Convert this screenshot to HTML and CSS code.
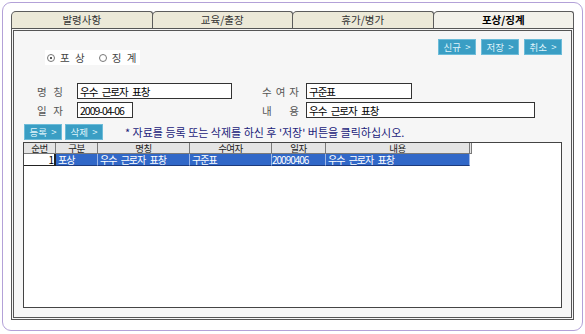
FILE: index.html
```html
<!DOCTYPE html>
<html>
<head>
    <meta charset="utf-8">
    <link rel="stylesheet" href="styles.css">
</head>
<body>

    <div class="frame">

        <div class="tabs">
            <div class="tab">발령사항</div>
            <div class="tab">교육/출장</div>
            <div class="tab">휴가/병가</div>
            <div class="tab active">포상/징계</div>
        </div>

        <div class="panel">

            <div class="toolbar">
                <div class="choice">
                    <span class="radio checked"></span><span class="choice-text">포 상</span>
                    <span class="radio"></span><span class="choice-text">징 계</span>
                </div>
                <div class="actions">
                    <button class="btn">신규 &gt;</button>
                    <button class="btn">저장 &gt;</button>
                    <button class="btn">취소 &gt;</button>
                </div>
            </div>

            <div class="fields">
                <div class="field-row">
                    <label class="label">명 칭</label>
                    <input class="input name" type="text" value="우수 근로자 표창">
                    <label class="label wide">수 여 자</label>
                    <input class="input giver" type="text" value="구준표">
                </div>
                <div class="field-row">
                    <label class="label">일 자</label>
                    <input class="input date" type="text" value="2009-04-06">
                    <label class="label wide">내 용</label>
                    <input class="input memo" type="text" value="우수 근로자 표창">
                </div>
            </div>

            <div class="list-bar">
                <button class="btn">등록 &gt;</button>
                <button class="btn">삭제 &gt;</button>
                <span class="notice">* 자료를 등록 또는 삭제를 하신 후 '저장' 버튼을 클릭하십시오.</span>
            </div>

            <div class="grid">
                <div class="grid-head">
                    <div class="hcell">순번</div>
                    <div class="hcell">구분</div>
                    <div class="hcell">명칭</div>
                    <div class="hcell">수여자</div>
                    <div class="hcell">일자</div>
                    <div class="hcell">내용</div>
                    <div class="hcell"></div>
                </div>
                <div class="grid-row">
                    <div class="cell num">1</div>
                    <div class="cell sel">포상</div>
                    <div class="cell sel">우수 근로자 표창</div>
                    <div class="cell sel">구준표</div>
                    <div class="cell sel date-cell">20090406</div>
                    <div class="cell sel">우수 근로자 표창</div>
                </div>
            </div>

        </div>
    </div>

</body>
</html>
```

FILE: styles.css
```css
body {
    margin: 0;
    background: #fff;
    font-family: "Noto Sans CJK KR", "Noto Sans", sans-serif;
    font-size: 10px;
    color: #333;
}

.frame {
    box-sizing: border-box;
    width: 581px;
    height: 329px;
    margin: 2px;
    padding: 8px;
    border: 1px solid #b3a1d8;
    border-radius: 9px;
}

/* tabs */
.tabs {
    display: flex;
    height: 17px;
}

.tab {
    flex: 1;
    box-sizing: border-box;
    margin-left: -1px;
    border: 1px solid #5c5c5c;
    border-bottom: none;
    border-radius: 5px 3px 0 0;
    background: #ece9d8;
    text-align: center;
    font-size: 10.5px;
    line-height: 15px;
    color: #333;
}

.tab:first-child {
    margin-left: 0;
}

.tab.active {
    background: #f2f1ea;
    font-weight: bold;
    color: #000;
}

.panel {
    box-sizing: border-box;
    height: 292px;
    padding: 8px 9px 9px 9px;
    border: 3px double #555;
    background: #f6f6f6;
    display: flex;
    flex-direction: column;
}

/* top row */
.toolbar {
    display: flex;
    height: 26px;
}

.choice {
    align-self: flex-end;
    display: flex;
    align-items: center;
    width: 95px;
    height: 15px;
    margin-left: 22px;
    background: #fff;
    white-space: nowrap;
}

.radio {
    flex: none;
    box-sizing: border-box;
    width: 8px;
    height: 8px;
    margin: 0 5px 0 2px;
    border: 1px solid #777;
    border-radius: 50%;
    position: relative;
}

.radio.checked::after {
    content: "";
    position: absolute;
    left: 2px;
    top: 2px;
    width: 2px;
    height: 2px;
    border-radius: 50%;
    background: #222;
}

.choice-text {
    margin-right: 12px;
    font-size: 10.5px;
    word-spacing: 3px;
    color: #444;
}

.actions {
    align-self: flex-start;
    display: flex;
    gap: 5px;
    margin-left: auto;
}

.btn {
    box-sizing: border-box;
    width: 38px;
    height: 16px;
    padding: 0;
    border: 1px solid #6dbcd9;
    background: #3a9ec4;
    color: #dff3fa;
    font-family: inherit;
    font-size: 9.5px;
    line-height: 14px;
    word-spacing: 2px;
}

/* form fields */
.fields {
    display: flex;
    flex-direction: column;
    gap: 3px;
    margin-top: 18px;
}

.field-row {
    display: grid;
    grid-template-columns: 54px 185px 44px auto;
    align-items: center;
    height: 16px;
}

.label {
    width: 26px;
    margin-left: 14px;
    text-align-last: justify;
    font-size: 10.5px;
    color: #555;
}

.label.wide {
    width: 37px;
    margin-left: 0;
}

.input {
    box-sizing: border-box;
    height: 16px;
    padding: 0 2px;
    border: 1px solid #333;
    background: #fff;
    font-family: inherit;
    font-size: 10.5px;
    letter-spacing: -1px;
    word-spacing: 3px;
    color: #000;
    outline: none;
}

.input.name { width: 155px; }
.input.date { width: 56px; }
.input.giver { width: 106px; }
.input.memo { width: 229px; }

/* list */
.list-bar {
    display: flex;
    align-items: center;
    gap: 3px;
    height: 16px;
    margin-top: 6px;
    padding-left: 1px;
}

.notice {
    margin-left: 19px;
    font-size: 11px;
    color: #22227a;
    white-space: nowrap;
}

.grid {
    flex: 1;
    margin-top: 2px;
    border: 1px solid #444;
    background: #fff;
}

.grid-head,
.grid-row {
    display: grid;
    grid-template-columns: 32px 42px 92px 82px 54px 144px 2px;
}

.hcell {
    box-sizing: border-box;
    height: 11px;
    border-right: 1px solid #7a7a7a;
    border-bottom: 1px solid #7a7a7a;
    background: #e4e4e4;
    text-align: center;
    font-size: 9.5px;
    line-height: 10px;
    letter-spacing: -0.5px;
    color: #222;
}

.cell {
    box-sizing: border-box;
    height: 12px;
    font-size: 10px;
    line-height: 11px;
    letter-spacing: -1px;
    word-spacing: 3px;
    white-space: nowrap;
}

.cell.num {
    border-right: 2px solid #222;
    border-bottom: 1px solid #222;
    text-align: right;
    padding-right: 1px;
    color: #000;
}

.cell.sel {
    padding-left: 2px;
    border-right: 1px solid #9db6e6;
    border-bottom: 1px solid #1c3a7c;
    background: #3168c8;
    color: #fff;
}

.cell.date-cell {
    padding-left: 0;
}
```
